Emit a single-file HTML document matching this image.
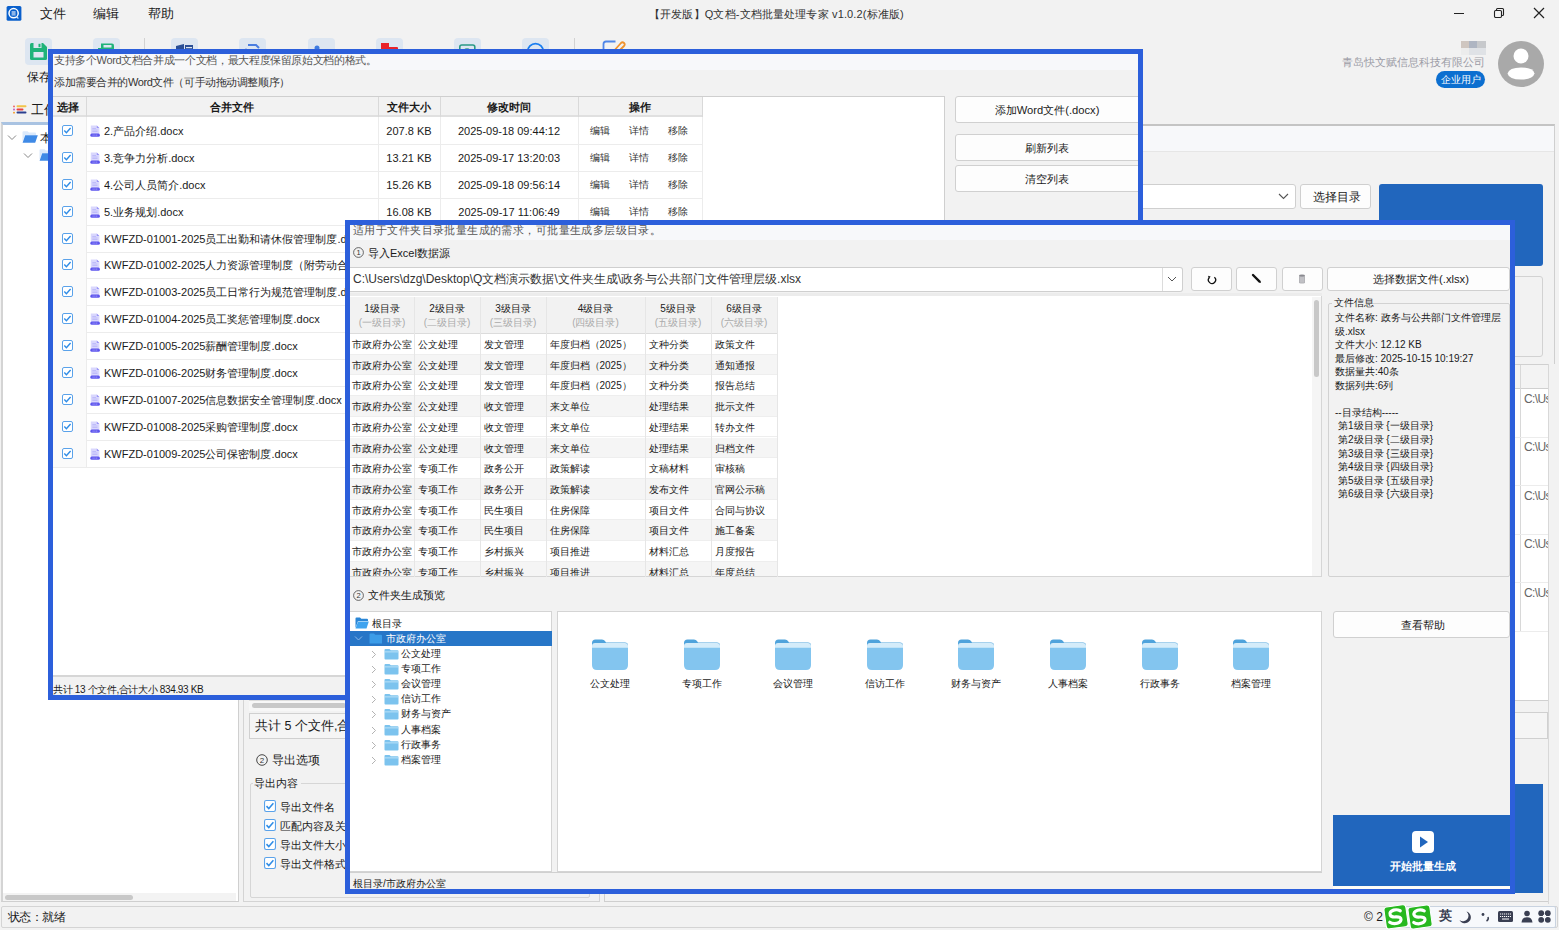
<!DOCTYPE html><html><head><meta charset="utf-8"><style>
*{box-sizing:border-box;margin:0;padding:0}
html,body{width:1559px;height:930px;overflow:hidden;background:#f2f2f2;font-family:"Liberation Sans",sans-serif;color:#1a1a1a}
div{position:absolute}
.t{white-space:nowrap;font-size:12px;line-height:14px}
.c{text-align:center}
.b{font-weight:bold}
.g{color:#9a9a9a}
.btn{background:#fdfdfd;border:1px solid #d0d0d0;border-radius:3px}
svg{display:block}
</style></head><body>
<div style="left:6px;top:6px"><svg width="16" height="15" viewBox="0 0 16 15"><rect x="0.6" y="0" width="14.8" height="14.8" rx="1.6" fill="#0a60cc"/><circle cx="7.6" cy="7.2" r="4.6" fill="none" stroke="#fff" stroke-width="1.5"/><rect x="5.6" y="5" width="4" height="4.6" fill="#8fb6e8"/><path d="M10.2 10.6 L12.4 12.6" stroke="#cfe0f5" stroke-width="1.4"/></svg></div>
<div class="t " style="left:40px;top:7px;font-size:13px">文件</div>
<div class="t " style="left:93px;top:7px;font-size:13px">编辑</div>
<div class="t " style="left:148px;top:7px;font-size:13px">帮助</div>
<div class="t " style="left:649px;top:7px;font-size:11px;letter-spacing:0.15px;color:#333">【开发版】Q文档-文档批量处理专家 v1.0.2(标准版)</div>
<div style="position:absolute;left:1454px;top:13px;width:10px;height:1px;background:#222"></div>
<div style="left:1492px;top:6px"><svg width="14" height="14" viewBox="0 0 14 14"><rect x="2.5" y="4.5" width="7" height="7" rx="1.2" fill="none" stroke="#222" stroke-width="1.1"/><path d="M4.5 4.5 V3.5 Q4.5 2.5 5.5 2.5 H10.5 Q11.5 2.5 11.5 3.5 V8.5 Q11.5 9.5 10.5 9.5 H9.5" fill="none" stroke="#222" stroke-width="1.1"/></svg></div>
<div style="left:1533px;top:7px"><svg width="12" height="12" viewBox="0 0 12 12"><path d="M1 1 L11 11 M11 1 L1 11" stroke="#222" stroke-width="1.2"/></svg></div>
<div style="position:absolute;left:25px;top:38px;width:27px;height:27px;background:#dde6f1;border-radius:4px"></div>
<div style="position:absolute;left:93px;top:38px;width:27px;height:27px;background:#dde6f1;border-radius:4px"></div>
<div style="position:absolute;left:171px;top:38px;width:27px;height:27px;background:#dde6f1;border-radius:4px"></div>
<div style="position:absolute;left:239px;top:38px;width:27px;height:27px;background:#dde6f1;border-radius:4px"></div>
<div style="position:absolute;left:308px;top:38px;width:27px;height:27px;background:#dde6f1;border-radius:4px"></div>
<div style="position:absolute;left:376px;top:38px;width:27px;height:27px;background:#dde6f1;border-radius:4px"></div>
<div style="position:absolute;left:454px;top:38px;width:27px;height:27px;background:#dde6f1;border-radius:4px"></div>
<div style="position:absolute;left:522px;top:38px;width:27px;height:27px;background:#dde6f1;border-radius:4px"></div>
<div style="position:absolute;left:144px;top:38px;width:1px;height:22px;background:#d2d2d2"></div>
<div style="position:absolute;left:574px;top:38px;width:1px;height:22px;background:#d2d2d2"></div>
<div style="left:29px;top:42px"><svg width="19" height="19" viewBox="0 0 19 19"><path d="M1 2.5 Q1 1 2.5 1 H14 L18 5 V16.5 Q18 18 16.5 18 H2.5 Q1 18 1 16.5Z" fill="#1fb37a"/><rect x="4.5" y="1" width="8" height="5" fill="#dde6f1"/><rect x="9.5" y="1.8" width="2" height="3.4" fill="#1fb37a"/><rect x="4.5" y="10" width="10" height="5.5" fill="#dde6f1"/></svg></div>
<div style="left:97px;top:42px"><svg width="19" height="19" viewBox="0 0 19 19"><path d="M4 1.5 H15 Q17 1.5 17 3.5 V7 H4Z" fill="#1fb37a"/><rect x="6.5" y="3" width="8" height="2.5" fill="#dde6f1"/><rect x="1" y="6" width="3" height="3" fill="#1fb37a"/></svg></div>
<div style="left:175px;top:42px"><svg width="19" height="19" viewBox="0 0 19 19"><path d="M1 4 L9 2 V10 H1Z" fill="#2b4f96"/><rect x="10" y="3" width="8" height="7" fill="#2b4f96"/><rect x="11" y="5" width="6" height="1.2" fill="#dde6f1"/></svg></div>
<div style="left:243px;top:42px"><svg width="19" height="19" viewBox="0 0 19 19"><path d="M5 3 H13 L16 6" fill="none" stroke="#4a7de0" stroke-width="2"/><circle cx="3" cy="8" r="1.5" fill="#4a7de0"/></svg></div>
<div style="left:312px;top:42px"><svg width="19" height="19" viewBox="0 0 19 19"><circle cx="5" cy="6" r="2.5" fill="#3e7be0"/><rect x="10" y="7" width="7" height="2" fill="#3e7be0"/></svg></div>
<div style="left:380px;top:42px"><svg width="19" height="19" viewBox="0 0 19 19"><rect x="1" y="1" width="8" height="6" fill="#e9232a"/><rect x="7" y="5" width="11" height="4" rx="1" fill="#e9232a"/></svg></div>
<div style="left:458px;top:42px"><svg width="19" height="19" viewBox="0 0 19 19"><rect x="1.8" y="3" width="15" height="11" rx="2" fill="none" stroke="#2a9a86" stroke-width="1.6"/><circle cx="9" cy="11" r="4" fill="none" stroke="#2a9a86" stroke-width="1.5"/></svg></div>
<div style="left:526px;top:42px"><svg width="19" height="19" viewBox="0 0 19 19"><circle cx="9.5" cy="9.5" r="7.8" fill="none" stroke="#1a7ef0" stroke-width="1.8"/><rect x="7" y="7" width="5" height="2" fill="#555"/></svg></div>
<div style="left:601px;top:39px"><svg width="26" height="16" viewBox="0 0 26 16"><path d="M14.5 2.5 H5 Q2.5 2.5 2.5 5 V14" fill="none" stroke="#4f86e8" stroke-width="1.8"/><path d="M11 14 L20 4 Q21.5 2.5 23 4 Q24.5 5.5 23 7 L14 16" fill="none" stroke="#f0932e" stroke-width="1.8"/></svg></div>
<div class="t " style="left:27px;top:70px;font-size:12px">保存</div>
<div style="left:1461px;top:41px;width:25px;height:15px"><div style="left:0;top:0;width:8px;height:7px;background:#cfc6c0"></div><div style="left:8px;top:0;width:8px;height:7px;background:#aeb5c2"></div><div style="left:16px;top:0;width:9px;height:7px;background:#c7c9cc"></div><div style="left:0;top:7px;width:8px;height:7px;background:#ececec"></div><div style="left:8px;top:7px;width:17px;height:7px;background:#dfe2e6"></div></div>
<div class="t " style="left:1342px;top:55px;font-size:11px;color:#9c9ca6">青岛快文赋信息科技有限公司</div>
<div style="position:absolute;left:1436px;top:71px;width:49px;height:17px;background:#0c6fd0;border-radius:9px"></div>
<div class="t c " style="left:1310.5px;top:72.5px;width:300px;font-size:10.4px;color:#fff">企业用户</div>
<div style="left:1498px;top:41px"><svg width="46" height="46" viewBox="0 0 46 46"><circle cx="23" cy="23" r="23" fill="#a9a9a9"/><circle cx="23" cy="15" r="7.5" fill="#fff"/><path d="M9.5 32.5 Q11 26.5 23 26.5 Q35 26.5 36.5 32.5 Q35 38.5 23 38.5 Q11 38.5 9.5 32.5Z" fill="#fff"/></svg></div>
<div style="left:13px;top:105px"><svg width="14" height="9" viewBox="0 0 14 9"><rect x="0" y="0.5" width="2" height="1.8" rx="0.9" fill="#f06a6a"/><rect x="3.5" y="0.2" width="10" height="2" rx="1" fill="#f2c44a"/><rect x="0" y="3.6" width="2" height="1.8" rx="0.9" fill="#c060c8"/><rect x="3.5" y="3.4" width="7" height="2" rx="1" fill="#e84040"/><rect x="0" y="6.8" width="2" height="1.8" rx="0.9" fill="#f5a030"/><rect x="3.5" y="6.6" width="10" height="2" rx="1" fill="#2a3f8f"/></svg></div>
<div class="t " style="left:31px;top:103px;font-size:13px">工作区</div>
<div style="position:absolute;left:1px;top:122px;width:238px;height:780px;background:#fff;border:1px solid #cfcfcf;border-left:2px solid #d4d4d4;border-top:3px solid #a9c3e2"></div>
<div style="left:7px;top:134px"><svg width="10" height="7" viewBox="0 0 10 7"><path d="M1 1.5 L5 5.5 L9 1.5" fill="none" stroke="#888" stroke-width="1"/></svg></div>
<div style="left:22px;top:131px"><svg width="16" height="12" viewBox="0 0 16 12"><path d="M0.5 1.2 Q0.5 0.3 1.5 0.3 H5.5 L7 1.6 H13 Q14 1.6 14 2.6 V4 H3 L0.5 11Z" fill="#dbe9fb"/><path d="M3.2 4.3 H15.8 L13.2 11.8 H0.6Z" fill="#3f8ae6"/></svg></div>
<div class="t " style="left:40px;top:131px;font-size:12px">本</div>
<div style="left:23px;top:152px"><svg width="10" height="7" viewBox="0 0 10 7"><path d="M1 1.5 L5 5.5 L9 1.5" fill="none" stroke="#888" stroke-width="1"/></svg></div>
<div style="left:39px;top:149px"><svg width="16" height="12" viewBox="0 0 16 12"><path d="M0.5 1.2 Q0.5 0.3 1.5 0.3 H5.5 L7 1.6 H13 Q14 1.6 14 2.6 V4 H3 L0.5 11Z" fill="#dbe9fb"/><path d="M3.2 4.3 H15.8 L13.2 11.8 H0.6Z" fill="#3f8ae6"/></svg></div>
<div style="position:absolute;left:3px;top:893px;width:233px;height:8px;background:#f3f3f3"></div>
<div style="position:absolute;left:5px;top:895px;width:128px;height:5px;background:#c8c8c8;border-radius:3px"></div>
<div style="position:absolute;left:243px;top:122px;width:357px;height:780px;background:#f2f2f2;border:1px solid #d4d4d4"></div>
<div style="position:absolute;left:249px;top:700px;width:97px;height:11px;background:#f7f7f7;border-top:1px solid #ddd"></div>
<div style="position:absolute;left:252px;top:703px;width:94px;height:5px;background:#c8c8c8;border-radius:3px"></div>
<div style="position:absolute;left:249px;top:713px;width:100px;height:26px;background:#f5f5f5;border:1px solid #d0d0d0"></div>
<div class="t " style="left:255px;top:719px;font-size:12.5px">共计 5 个文件,合计大小</div>
<div style="left:256px;top:754px"><svg width="12" height="12" viewBox="0 0 12 12"><circle cx="6" cy="6" r="5.3" fill="none" stroke="#333" stroke-width="0.9"/><text x="6" y="9" font-size="8" text-anchor="middle" fill="#333" font-family="Liberation Sans">2</text></svg></div>
<div class="t " style="left:272px;top:753px;font-size:12px">导出选项</div>
<div style="position:absolute;left:250px;top:783px;width:340px;height:115px;border:1px solid #d6d6d6;border-radius:2px"></div>
<div style="position:absolute;left:253px;top:776px;width:48px;height:14px;background:#f2f2f2"></div>
<div class="t " style="left:254px;top:776px;font-size:11px">导出内容</div>
<div style="left:264px;top:800px"><svg width="12" height="12" viewBox="0 0 11 11"><rect x="0.5" y="0.5" width="10" height="10" rx="1.5" fill="#fff" stroke="#5aa2ea"/><path d="M2.3 5.6 L4.4 7.8 L8.6 3.0" fill="none" stroke="#2f8ce6" stroke-width="1.4"/></svg></div>
<div class="t " style="left:280px;top:800px;font-size:11px">导出文件名</div>
<div style="left:264px;top:819px"><svg width="12" height="12" viewBox="0 0 11 11"><rect x="0.5" y="0.5" width="10" height="10" rx="1.5" fill="#fff" stroke="#5aa2ea"/><path d="M2.3 5.6 L4.4 7.8 L8.6 3.0" fill="none" stroke="#2f8ce6" stroke-width="1.4"/></svg></div>
<div class="t " style="left:280px;top:819px;font-size:11px">匹配内容及关</div>
<div style="left:264px;top:838px"><svg width="12" height="12" viewBox="0 0 11 11"><rect x="0.5" y="0.5" width="10" height="10" rx="1.5" fill="#fff" stroke="#5aa2ea"/><path d="M2.3 5.6 L4.4 7.8 L8.6 3.0" fill="none" stroke="#2f8ce6" stroke-width="1.4"/></svg></div>
<div class="t " style="left:280px;top:838px;font-size:11px">导出文件大小</div>
<div style="left:264px;top:857px"><svg width="12" height="12" viewBox="0 0 11 11"><rect x="0.5" y="0.5" width="10" height="10" rx="1.5" fill="#fff" stroke="#5aa2ea"/><path d="M2.3 5.6 L4.4 7.8 L8.6 3.0" fill="none" stroke="#2f8ce6" stroke-width="1.4"/></svg></div>
<div class="t " style="left:280px;top:857px;font-size:11px">导出文件格式</div>
<div style="position:absolute;left:604px;top:124px;width:951px;height:778px;background:#f2f2f2;border:1px solid #cfcfcf;border-top:2px solid #c4c4c4"></div>
<div style="position:absolute;left:605px;top:126px;width:949px;height:26px;background:#f7f8fa;border-bottom:1px solid #e6e6e6"></div>
<div style="position:absolute;left:1000px;top:184px;width:296px;height:25px;background:#fff;border:1px solid #cfcfcf;border-radius:3px"></div>
<div style="left:1278px;top:192px"><svg width="11" height="8" viewBox="0 0 11 8"><path d="M1 2 L5.5 6.5 L10 2" fill="none" stroke="#555" stroke-width="1.1"/></svg></div>
<div style="position:absolute;left:1300px;top:184px;width:71px;height:25px;background:#fdfdfd;border:1px solid #cfcfcf;border-radius:3px"></div>
<div class="t " style="left:1313px;top:190px;font-size:12px">选择目录</div>
<div style="position:absolute;left:1379px;top:184px;width:164px;height:82px;background:#2166bd;border-radius:3px"></div>
<div style="position:absolute;left:1510px;top:276px;width:33px;height:81px;border:1px solid #d2d2d2;border-radius:3px"></div>
<div style="position:absolute;left:1510px;top:364px;width:40px;height:337px;background:#fff;border:1px solid #d0d0d0"></div>
<div style="position:absolute;left:1510px;top:365px;width:39px;height:24px;background:#f3f3f3;border-bottom:1px solid #d0d0d0"></div>
<div style="position:absolute;left:1520px;top:365px;width:1px;height:266px;background:#d8d8d8"></div>
<div style="position:absolute;left:1515px;top:437px;width:34px;height:1px;background:#ececec"></div>
<div style="position:absolute;left:1515px;top:485px;width:34px;height:1px;background:#ececec"></div>
<div style="position:absolute;left:1515px;top:534px;width:34px;height:1px;background:#ececec"></div>
<div style="position:absolute;left:1515px;top:582px;width:34px;height:1px;background:#ececec"></div>
<div style="position:absolute;left:1515px;top:631px;width:34px;height:1px;background:#ececec"></div>
<div class="t " style="left:1524px;top:392px;font-size:12px;color:#666;letter-spacing:-0.6px">C:\Us</div>
<div class="t " style="left:1524px;top:440px;font-size:12px;color:#666;letter-spacing:-0.6px">C:\Us</div>
<div class="t " style="left:1524px;top:489px;font-size:12px;color:#666;letter-spacing:-0.6px">C:\Us</div>
<div class="t " style="left:1524px;top:537px;font-size:12px;color:#666;letter-spacing:-0.6px">C:\Us</div>
<div class="t " style="left:1524px;top:586px;font-size:12px;color:#666;letter-spacing:-0.6px">C:\Us</div>
<div style="position:absolute;left:1510px;top:712px;width:38px;height:27px;border:1px solid #d0d0d0;background:#f5f5f5"></div>
<div style="position:absolute;left:1515px;top:784px;width:28px;height:109px;background:#2166bd"></div>
<div style="position:absolute;left:1548px;top:364px;width:7px;height:540px;background:#f2f2f2;border-left:1px solid #d8d8d8"></div>
<div style="position:absolute;left:1px;top:906px;width:1557px;height:22px;background:#f2f2f2;border:1px solid #d4d4d4;border-radius:2px"></div>
<div class="t " style="left:8px;top:910px;font-size:12px;letter-spacing:-0.6px">状态：就绪</div>
<div class="t " style="left:1364px;top:910px;font-size:12px">© 2</div>
<div style="position:absolute;left:48px;top:49px;width:1095px;height:651px;background:#f2f2f2;border:5px solid #2c5fdb"></div>
<div style="position:absolute;left:53px;top:54px;width:1085px;height:16px;background:#f7f8fa"></div>
<div class="t " style="left:54px;top:53px;font-size:11px;letter-spacing:-0.36px;color:#555">支持多个Word文档合并成一个文档，最大程度保留原始文档的格式。</div>
<div class="t " style="left:54px;top:75px;font-size:11px;letter-spacing:-0.43px;color:#333">添加需要合并的Word文件（可手动拖动调整顺序）</div>
<div style="position:absolute;left:53px;top:96px;width:892px;height:579px;background:#fff;border-top:1px solid #cfcfcf;border-right:1px solid #cfcfcf"></div>
<div style="position:absolute;left:53px;top:97px;width:650px;height:20px;background:#f2f2f2;border-bottom:2px solid #e0e0e0"></div>
<div style="position:absolute;left:86px;top:97px;width:1px;height:20px;background:#d9d9d9"></div>
<div style="position:absolute;left:378px;top:97px;width:1px;height:20px;background:#d9d9d9"></div>
<div style="position:absolute;left:440px;top:97px;width:1px;height:20px;background:#d9d9d9"></div>
<div style="position:absolute;left:578px;top:97px;width:1px;height:20px;background:#d9d9d9"></div>
<div style="position:absolute;left:702px;top:97px;width:1px;height:20px;background:#d9d9d9"></div>
<div class="t b" style="left:57px;top:100px;font-size:11px">选择</div>
<div class="t c b" style="left:82px;top:100px;width:300px;font-size:11px">合并文件</div>
<div class="t c b" style="left:259px;top:100px;width:300px;font-size:11px">文件大小</div>
<div class="t c b" style="left:359px;top:100px;width:300px;font-size:11px">修改时间</div>
<div class="t c b" style="left:490px;top:100px;width:300px;font-size:11px">操作</div>
<div style="position:absolute;left:53px;top:117px;width:33px;height:27px;background:#fafafa"></div>
<div style="position:absolute;left:53px;top:144px;width:650px;height:1px;background:#ececec"></div>
<div style="position:absolute;left:86px;top:117px;width:1px;height:27px;background:#ececec"></div>
<div style="position:absolute;left:378px;top:117px;width:1px;height:27px;background:#ececec"></div>
<div style="position:absolute;left:440px;top:117px;width:1px;height:27px;background:#ececec"></div>
<div style="position:absolute;left:578px;top:117px;width:1px;height:27px;background:#ececec"></div>
<div style="position:absolute;left:702px;top:117px;width:1px;height:27px;background:#ececec"></div>
<div style="left:62px;top:125px"><svg width="11" height="11" viewBox="0 0 11 11"><rect x="0.5" y="0.5" width="10" height="10" rx="1.5" fill="#fff" stroke="#5aa2ea"/><path d="M2.3 5.6 L4.4 7.8 L8.6 3.0" fill="none" stroke="#2f8ce6" stroke-width="1.4"/></svg></div>
<div style="left:90px;top:125px"><svg width="10" height="12" viewBox="0 0 10 12"><path d="M0.8 0.5 H6.8 L9.4 3.1 V9 H0.8 Z" fill="#d9d7fd"/><path d="M6.8 0.5 L9.4 3.1 H6.8Z" fill="#9a96f6"/><path d="M2.3 3.5 H6 M2.3 5 H7.5 M2.3 6.5 H7.5" stroke="#b9b5f9" stroke-width="0.8"/><rect x="0.3" y="8.4" width="9.6" height="3.4" rx="1.5" fill="#5d55ee"/><path d="M2.5 10.1 H7.8" stroke="#a9a4f7" stroke-width="0.9" stroke-dasharray="1.2 0.6"/></svg></div>
<div class="t" style="left:104px;top:124px;width:273px;overflow:hidden;font-size:11px">2.产品介绍.docx</div>
<div class="t c " style="left:259px;top:124px;width:300px;font-size:11px">207.8 KB</div>
<div class="t c " style="left:359px;top:124px;width:300px;font-size:11px">2025-09-18 09:44:12</div>
<div class="t " style="left:590px;top:124px;font-size:10px;color:#333">编辑</div>
<div class="t " style="left:629px;top:124px;font-size:10px;color:#333">详情</div>
<div class="t " style="left:668px;top:124px;font-size:10px;color:#333">移除</div>
<div style="position:absolute;left:53px;top:144px;width:33px;height:27px;background:#fafafa"></div>
<div style="position:absolute;left:53px;top:171px;width:650px;height:1px;background:#ececec"></div>
<div style="position:absolute;left:86px;top:144px;width:1px;height:27px;background:#ececec"></div>
<div style="position:absolute;left:378px;top:144px;width:1px;height:27px;background:#ececec"></div>
<div style="position:absolute;left:440px;top:144px;width:1px;height:27px;background:#ececec"></div>
<div style="position:absolute;left:578px;top:144px;width:1px;height:27px;background:#ececec"></div>
<div style="position:absolute;left:702px;top:144px;width:1px;height:27px;background:#ececec"></div>
<div style="left:62px;top:152px"><svg width="11" height="11" viewBox="0 0 11 11"><rect x="0.5" y="0.5" width="10" height="10" rx="1.5" fill="#fff" stroke="#5aa2ea"/><path d="M2.3 5.6 L4.4 7.8 L8.6 3.0" fill="none" stroke="#2f8ce6" stroke-width="1.4"/></svg></div>
<div style="left:90px;top:152px"><svg width="10" height="12" viewBox="0 0 10 12"><path d="M0.8 0.5 H6.8 L9.4 3.1 V9 H0.8 Z" fill="#d9d7fd"/><path d="M6.8 0.5 L9.4 3.1 H6.8Z" fill="#9a96f6"/><path d="M2.3 3.5 H6 M2.3 5 H7.5 M2.3 6.5 H7.5" stroke="#b9b5f9" stroke-width="0.8"/><rect x="0.3" y="8.4" width="9.6" height="3.4" rx="1.5" fill="#5d55ee"/><path d="M2.5 10.1 H7.8" stroke="#a9a4f7" stroke-width="0.9" stroke-dasharray="1.2 0.6"/></svg></div>
<div class="t" style="left:104px;top:151px;width:273px;overflow:hidden;font-size:11px">3.竞争力分析.docx</div>
<div class="t c " style="left:259px;top:151px;width:300px;font-size:11px">13.21 KB</div>
<div class="t c " style="left:359px;top:151px;width:300px;font-size:11px">2025-09-17 13:20:03</div>
<div class="t " style="left:590px;top:151px;font-size:10px;color:#333">编辑</div>
<div class="t " style="left:629px;top:151px;font-size:10px;color:#333">详情</div>
<div class="t " style="left:668px;top:151px;font-size:10px;color:#333">移除</div>
<div style="position:absolute;left:53px;top:171px;width:33px;height:27px;background:#fafafa"></div>
<div style="position:absolute;left:53px;top:198px;width:650px;height:1px;background:#ececec"></div>
<div style="position:absolute;left:86px;top:171px;width:1px;height:27px;background:#ececec"></div>
<div style="position:absolute;left:378px;top:171px;width:1px;height:27px;background:#ececec"></div>
<div style="position:absolute;left:440px;top:171px;width:1px;height:27px;background:#ececec"></div>
<div style="position:absolute;left:578px;top:171px;width:1px;height:27px;background:#ececec"></div>
<div style="position:absolute;left:702px;top:171px;width:1px;height:27px;background:#ececec"></div>
<div style="left:62px;top:179px"><svg width="11" height="11" viewBox="0 0 11 11"><rect x="0.5" y="0.5" width="10" height="10" rx="1.5" fill="#fff" stroke="#5aa2ea"/><path d="M2.3 5.6 L4.4 7.8 L8.6 3.0" fill="none" stroke="#2f8ce6" stroke-width="1.4"/></svg></div>
<div style="left:90px;top:179px"><svg width="10" height="12" viewBox="0 0 10 12"><path d="M0.8 0.5 H6.8 L9.4 3.1 V9 H0.8 Z" fill="#d9d7fd"/><path d="M6.8 0.5 L9.4 3.1 H6.8Z" fill="#9a96f6"/><path d="M2.3 3.5 H6 M2.3 5 H7.5 M2.3 6.5 H7.5" stroke="#b9b5f9" stroke-width="0.8"/><rect x="0.3" y="8.4" width="9.6" height="3.4" rx="1.5" fill="#5d55ee"/><path d="M2.5 10.1 H7.8" stroke="#a9a4f7" stroke-width="0.9" stroke-dasharray="1.2 0.6"/></svg></div>
<div class="t" style="left:104px;top:178px;width:273px;overflow:hidden;font-size:11px">4.公司人员简介.docx</div>
<div class="t c " style="left:259px;top:178px;width:300px;font-size:11px">15.26 KB</div>
<div class="t c " style="left:359px;top:178px;width:300px;font-size:11px">2025-09-18 09:56:14</div>
<div class="t " style="left:590px;top:178px;font-size:10px;color:#333">编辑</div>
<div class="t " style="left:629px;top:178px;font-size:10px;color:#333">详情</div>
<div class="t " style="left:668px;top:178px;font-size:10px;color:#333">移除</div>
<div style="position:absolute;left:53px;top:198px;width:33px;height:27px;background:#fafafa"></div>
<div style="position:absolute;left:53px;top:225px;width:650px;height:1px;background:#ececec"></div>
<div style="position:absolute;left:86px;top:198px;width:1px;height:27px;background:#ececec"></div>
<div style="position:absolute;left:378px;top:198px;width:1px;height:27px;background:#ececec"></div>
<div style="position:absolute;left:440px;top:198px;width:1px;height:27px;background:#ececec"></div>
<div style="position:absolute;left:578px;top:198px;width:1px;height:27px;background:#ececec"></div>
<div style="position:absolute;left:702px;top:198px;width:1px;height:27px;background:#ececec"></div>
<div style="left:62px;top:206px"><svg width="11" height="11" viewBox="0 0 11 11"><rect x="0.5" y="0.5" width="10" height="10" rx="1.5" fill="#fff" stroke="#5aa2ea"/><path d="M2.3 5.6 L4.4 7.8 L8.6 3.0" fill="none" stroke="#2f8ce6" stroke-width="1.4"/></svg></div>
<div style="left:90px;top:206px"><svg width="10" height="12" viewBox="0 0 10 12"><path d="M0.8 0.5 H6.8 L9.4 3.1 V9 H0.8 Z" fill="#d9d7fd"/><path d="M6.8 0.5 L9.4 3.1 H6.8Z" fill="#9a96f6"/><path d="M2.3 3.5 H6 M2.3 5 H7.5 M2.3 6.5 H7.5" stroke="#b9b5f9" stroke-width="0.8"/><rect x="0.3" y="8.4" width="9.6" height="3.4" rx="1.5" fill="#5d55ee"/><path d="M2.5 10.1 H7.8" stroke="#a9a4f7" stroke-width="0.9" stroke-dasharray="1.2 0.6"/></svg></div>
<div class="t" style="left:104px;top:205px;width:273px;overflow:hidden;font-size:11px">5.业务规划.docx</div>
<div class="t c " style="left:259px;top:205px;width:300px;font-size:11px">16.08 KB</div>
<div class="t c " style="left:359px;top:205px;width:300px;font-size:11px">2025-09-17 11:06:49</div>
<div class="t " style="left:590px;top:205px;font-size:10px;color:#333">编辑</div>
<div class="t " style="left:629px;top:205px;font-size:10px;color:#333">详情</div>
<div class="t " style="left:668px;top:205px;font-size:10px;color:#333">移除</div>
<div style="position:absolute;left:53px;top:225px;width:33px;height:27px;background:#fafafa"></div>
<div style="position:absolute;left:53px;top:252px;width:650px;height:1px;background:#ececec"></div>
<div style="position:absolute;left:86px;top:225px;width:1px;height:27px;background:#ececec"></div>
<div style="position:absolute;left:378px;top:225px;width:1px;height:27px;background:#ececec"></div>
<div style="position:absolute;left:440px;top:225px;width:1px;height:27px;background:#ececec"></div>
<div style="position:absolute;left:578px;top:225px;width:1px;height:27px;background:#ececec"></div>
<div style="position:absolute;left:702px;top:225px;width:1px;height:27px;background:#ececec"></div>
<div style="left:62px;top:233px"><svg width="11" height="11" viewBox="0 0 11 11"><rect x="0.5" y="0.5" width="10" height="10" rx="1.5" fill="#fff" stroke="#5aa2ea"/><path d="M2.3 5.6 L4.4 7.8 L8.6 3.0" fill="none" stroke="#2f8ce6" stroke-width="1.4"/></svg></div>
<div style="left:90px;top:233px"><svg width="10" height="12" viewBox="0 0 10 12"><path d="M0.8 0.5 H6.8 L9.4 3.1 V9 H0.8 Z" fill="#d9d7fd"/><path d="M6.8 0.5 L9.4 3.1 H6.8Z" fill="#9a96f6"/><path d="M2.3 3.5 H6 M2.3 5 H7.5 M2.3 6.5 H7.5" stroke="#b9b5f9" stroke-width="0.8"/><rect x="0.3" y="8.4" width="9.6" height="3.4" rx="1.5" fill="#5d55ee"/><path d="M2.5 10.1 H7.8" stroke="#a9a4f7" stroke-width="0.9" stroke-dasharray="1.2 0.6"/></svg></div>
<div class="t" style="left:104px;top:232px;width:273px;overflow:hidden;font-size:11px">KWFZD-01001-2025员工出勤和请休假管理制度.docx</div>
<div class="t c " style="left:259px;top:232px;width:300px;font-size:11px"></div>
<div class="t c " style="left:359px;top:232px;width:300px;font-size:11px"></div>
<div class="t " style="left:590px;top:232px;font-size:10px;color:#333">编辑</div>
<div class="t " style="left:629px;top:232px;font-size:10px;color:#333">详情</div>
<div class="t " style="left:668px;top:232px;font-size:10px;color:#333">移除</div>
<div style="position:absolute;left:53px;top:251px;width:33px;height:27px;background:#fafafa"></div>
<div style="position:absolute;left:53px;top:278px;width:650px;height:1px;background:#ececec"></div>
<div style="position:absolute;left:86px;top:251px;width:1px;height:27px;background:#ececec"></div>
<div style="position:absolute;left:378px;top:251px;width:1px;height:27px;background:#ececec"></div>
<div style="position:absolute;left:440px;top:251px;width:1px;height:27px;background:#ececec"></div>
<div style="position:absolute;left:578px;top:251px;width:1px;height:27px;background:#ececec"></div>
<div style="position:absolute;left:702px;top:251px;width:1px;height:27px;background:#ececec"></div>
<div style="left:62px;top:259px"><svg width="11" height="11" viewBox="0 0 11 11"><rect x="0.5" y="0.5" width="10" height="10" rx="1.5" fill="#fff" stroke="#5aa2ea"/><path d="M2.3 5.6 L4.4 7.8 L8.6 3.0" fill="none" stroke="#2f8ce6" stroke-width="1.4"/></svg></div>
<div style="left:90px;top:259px"><svg width="10" height="12" viewBox="0 0 10 12"><path d="M0.8 0.5 H6.8 L9.4 3.1 V9 H0.8 Z" fill="#d9d7fd"/><path d="M6.8 0.5 L9.4 3.1 H6.8Z" fill="#9a96f6"/><path d="M2.3 3.5 H6 M2.3 5 H7.5 M2.3 6.5 H7.5" stroke="#b9b5f9" stroke-width="0.8"/><rect x="0.3" y="8.4" width="9.6" height="3.4" rx="1.5" fill="#5d55ee"/><path d="M2.5 10.1 H7.8" stroke="#a9a4f7" stroke-width="0.9" stroke-dasharray="1.2 0.6"/></svg></div>
<div class="t" style="left:104px;top:258px;width:273px;overflow:hidden;font-size:11px">KWFZD-01002-2025人力资源管理制度（附劳动合同范本）.docx</div>
<div class="t c " style="left:259px;top:258px;width:300px;font-size:11px"></div>
<div class="t c " style="left:359px;top:258px;width:300px;font-size:11px"></div>
<div class="t " style="left:590px;top:258px;font-size:10px;color:#333">编辑</div>
<div class="t " style="left:629px;top:258px;font-size:10px;color:#333">详情</div>
<div class="t " style="left:668px;top:258px;font-size:10px;color:#333">移除</div>
<div style="position:absolute;left:53px;top:278px;width:33px;height:27px;background:#fafafa"></div>
<div style="position:absolute;left:53px;top:305px;width:650px;height:1px;background:#ececec"></div>
<div style="position:absolute;left:86px;top:278px;width:1px;height:27px;background:#ececec"></div>
<div style="position:absolute;left:378px;top:278px;width:1px;height:27px;background:#ececec"></div>
<div style="position:absolute;left:440px;top:278px;width:1px;height:27px;background:#ececec"></div>
<div style="position:absolute;left:578px;top:278px;width:1px;height:27px;background:#ececec"></div>
<div style="position:absolute;left:702px;top:278px;width:1px;height:27px;background:#ececec"></div>
<div style="left:62px;top:286px"><svg width="11" height="11" viewBox="0 0 11 11"><rect x="0.5" y="0.5" width="10" height="10" rx="1.5" fill="#fff" stroke="#5aa2ea"/><path d="M2.3 5.6 L4.4 7.8 L8.6 3.0" fill="none" stroke="#2f8ce6" stroke-width="1.4"/></svg></div>
<div style="left:90px;top:286px"><svg width="10" height="12" viewBox="0 0 10 12"><path d="M0.8 0.5 H6.8 L9.4 3.1 V9 H0.8 Z" fill="#d9d7fd"/><path d="M6.8 0.5 L9.4 3.1 H6.8Z" fill="#9a96f6"/><path d="M2.3 3.5 H6 M2.3 5 H7.5 M2.3 6.5 H7.5" stroke="#b9b5f9" stroke-width="0.8"/><rect x="0.3" y="8.4" width="9.6" height="3.4" rx="1.5" fill="#5d55ee"/><path d="M2.5 10.1 H7.8" stroke="#a9a4f7" stroke-width="0.9" stroke-dasharray="1.2 0.6"/></svg></div>
<div class="t" style="left:104px;top:285px;width:273px;overflow:hidden;font-size:11px">KWFZD-01003-2025员工日常行为规范管理制度.docx</div>
<div class="t c " style="left:259px;top:285px;width:300px;font-size:11px"></div>
<div class="t c " style="left:359px;top:285px;width:300px;font-size:11px"></div>
<div class="t " style="left:590px;top:285px;font-size:10px;color:#333">编辑</div>
<div class="t " style="left:629px;top:285px;font-size:10px;color:#333">详情</div>
<div class="t " style="left:668px;top:285px;font-size:10px;color:#333">移除</div>
<div style="position:absolute;left:53px;top:305px;width:33px;height:27px;background:#fafafa"></div>
<div style="position:absolute;left:53px;top:332px;width:650px;height:1px;background:#ececec"></div>
<div style="position:absolute;left:86px;top:305px;width:1px;height:27px;background:#ececec"></div>
<div style="position:absolute;left:378px;top:305px;width:1px;height:27px;background:#ececec"></div>
<div style="position:absolute;left:440px;top:305px;width:1px;height:27px;background:#ececec"></div>
<div style="position:absolute;left:578px;top:305px;width:1px;height:27px;background:#ececec"></div>
<div style="position:absolute;left:702px;top:305px;width:1px;height:27px;background:#ececec"></div>
<div style="left:62px;top:313px"><svg width="11" height="11" viewBox="0 0 11 11"><rect x="0.5" y="0.5" width="10" height="10" rx="1.5" fill="#fff" stroke="#5aa2ea"/><path d="M2.3 5.6 L4.4 7.8 L8.6 3.0" fill="none" stroke="#2f8ce6" stroke-width="1.4"/></svg></div>
<div style="left:90px;top:313px"><svg width="10" height="12" viewBox="0 0 10 12"><path d="M0.8 0.5 H6.8 L9.4 3.1 V9 H0.8 Z" fill="#d9d7fd"/><path d="M6.8 0.5 L9.4 3.1 H6.8Z" fill="#9a96f6"/><path d="M2.3 3.5 H6 M2.3 5 H7.5 M2.3 6.5 H7.5" stroke="#b9b5f9" stroke-width="0.8"/><rect x="0.3" y="8.4" width="9.6" height="3.4" rx="1.5" fill="#5d55ee"/><path d="M2.5 10.1 H7.8" stroke="#a9a4f7" stroke-width="0.9" stroke-dasharray="1.2 0.6"/></svg></div>
<div class="t" style="left:104px;top:312px;width:273px;overflow:hidden;font-size:11px">KWFZD-01004-2025员工奖惩管理制度.docx</div>
<div class="t c " style="left:259px;top:312px;width:300px;font-size:11px"></div>
<div class="t c " style="left:359px;top:312px;width:300px;font-size:11px"></div>
<div class="t " style="left:590px;top:312px;font-size:10px;color:#333">编辑</div>
<div class="t " style="left:629px;top:312px;font-size:10px;color:#333">详情</div>
<div class="t " style="left:668px;top:312px;font-size:10px;color:#333">移除</div>
<div style="position:absolute;left:53px;top:332px;width:33px;height:27px;background:#fafafa"></div>
<div style="position:absolute;left:53px;top:359px;width:650px;height:1px;background:#ececec"></div>
<div style="position:absolute;left:86px;top:332px;width:1px;height:27px;background:#ececec"></div>
<div style="position:absolute;left:378px;top:332px;width:1px;height:27px;background:#ececec"></div>
<div style="position:absolute;left:440px;top:332px;width:1px;height:27px;background:#ececec"></div>
<div style="position:absolute;left:578px;top:332px;width:1px;height:27px;background:#ececec"></div>
<div style="position:absolute;left:702px;top:332px;width:1px;height:27px;background:#ececec"></div>
<div style="left:62px;top:340px"><svg width="11" height="11" viewBox="0 0 11 11"><rect x="0.5" y="0.5" width="10" height="10" rx="1.5" fill="#fff" stroke="#5aa2ea"/><path d="M2.3 5.6 L4.4 7.8 L8.6 3.0" fill="none" stroke="#2f8ce6" stroke-width="1.4"/></svg></div>
<div style="left:90px;top:340px"><svg width="10" height="12" viewBox="0 0 10 12"><path d="M0.8 0.5 H6.8 L9.4 3.1 V9 H0.8 Z" fill="#d9d7fd"/><path d="M6.8 0.5 L9.4 3.1 H6.8Z" fill="#9a96f6"/><path d="M2.3 3.5 H6 M2.3 5 H7.5 M2.3 6.5 H7.5" stroke="#b9b5f9" stroke-width="0.8"/><rect x="0.3" y="8.4" width="9.6" height="3.4" rx="1.5" fill="#5d55ee"/><path d="M2.5 10.1 H7.8" stroke="#a9a4f7" stroke-width="0.9" stroke-dasharray="1.2 0.6"/></svg></div>
<div class="t" style="left:104px;top:339px;width:273px;overflow:hidden;font-size:11px">KWFZD-01005-2025薪酬管理制度.docx</div>
<div class="t c " style="left:259px;top:339px;width:300px;font-size:11px"></div>
<div class="t c " style="left:359px;top:339px;width:300px;font-size:11px"></div>
<div class="t " style="left:590px;top:339px;font-size:10px;color:#333">编辑</div>
<div class="t " style="left:629px;top:339px;font-size:10px;color:#333">详情</div>
<div class="t " style="left:668px;top:339px;font-size:10px;color:#333">移除</div>
<div style="position:absolute;left:53px;top:359px;width:33px;height:27px;background:#fafafa"></div>
<div style="position:absolute;left:53px;top:386px;width:650px;height:1px;background:#ececec"></div>
<div style="position:absolute;left:86px;top:359px;width:1px;height:27px;background:#ececec"></div>
<div style="position:absolute;left:378px;top:359px;width:1px;height:27px;background:#ececec"></div>
<div style="position:absolute;left:440px;top:359px;width:1px;height:27px;background:#ececec"></div>
<div style="position:absolute;left:578px;top:359px;width:1px;height:27px;background:#ececec"></div>
<div style="position:absolute;left:702px;top:359px;width:1px;height:27px;background:#ececec"></div>
<div style="left:62px;top:367px"><svg width="11" height="11" viewBox="0 0 11 11"><rect x="0.5" y="0.5" width="10" height="10" rx="1.5" fill="#fff" stroke="#5aa2ea"/><path d="M2.3 5.6 L4.4 7.8 L8.6 3.0" fill="none" stroke="#2f8ce6" stroke-width="1.4"/></svg></div>
<div style="left:90px;top:367px"><svg width="10" height="12" viewBox="0 0 10 12"><path d="M0.8 0.5 H6.8 L9.4 3.1 V9 H0.8 Z" fill="#d9d7fd"/><path d="M6.8 0.5 L9.4 3.1 H6.8Z" fill="#9a96f6"/><path d="M2.3 3.5 H6 M2.3 5 H7.5 M2.3 6.5 H7.5" stroke="#b9b5f9" stroke-width="0.8"/><rect x="0.3" y="8.4" width="9.6" height="3.4" rx="1.5" fill="#5d55ee"/><path d="M2.5 10.1 H7.8" stroke="#a9a4f7" stroke-width="0.9" stroke-dasharray="1.2 0.6"/></svg></div>
<div class="t" style="left:104px;top:366px;width:273px;overflow:hidden;font-size:11px">KWFZD-01006-2025财务管理制度.docx</div>
<div class="t c " style="left:259px;top:366px;width:300px;font-size:11px"></div>
<div class="t c " style="left:359px;top:366px;width:300px;font-size:11px"></div>
<div class="t " style="left:590px;top:366px;font-size:10px;color:#333">编辑</div>
<div class="t " style="left:629px;top:366px;font-size:10px;color:#333">详情</div>
<div class="t " style="left:668px;top:366px;font-size:10px;color:#333">移除</div>
<div style="position:absolute;left:53px;top:386px;width:33px;height:27px;background:#fafafa"></div>
<div style="position:absolute;left:53px;top:413px;width:650px;height:1px;background:#ececec"></div>
<div style="position:absolute;left:86px;top:386px;width:1px;height:27px;background:#ececec"></div>
<div style="position:absolute;left:378px;top:386px;width:1px;height:27px;background:#ececec"></div>
<div style="position:absolute;left:440px;top:386px;width:1px;height:27px;background:#ececec"></div>
<div style="position:absolute;left:578px;top:386px;width:1px;height:27px;background:#ececec"></div>
<div style="position:absolute;left:702px;top:386px;width:1px;height:27px;background:#ececec"></div>
<div style="left:62px;top:394px"><svg width="11" height="11" viewBox="0 0 11 11"><rect x="0.5" y="0.5" width="10" height="10" rx="1.5" fill="#fff" stroke="#5aa2ea"/><path d="M2.3 5.6 L4.4 7.8 L8.6 3.0" fill="none" stroke="#2f8ce6" stroke-width="1.4"/></svg></div>
<div style="left:90px;top:394px"><svg width="10" height="12" viewBox="0 0 10 12"><path d="M0.8 0.5 H6.8 L9.4 3.1 V9 H0.8 Z" fill="#d9d7fd"/><path d="M6.8 0.5 L9.4 3.1 H6.8Z" fill="#9a96f6"/><path d="M2.3 3.5 H6 M2.3 5 H7.5 M2.3 6.5 H7.5" stroke="#b9b5f9" stroke-width="0.8"/><rect x="0.3" y="8.4" width="9.6" height="3.4" rx="1.5" fill="#5d55ee"/><path d="M2.5 10.1 H7.8" stroke="#a9a4f7" stroke-width="0.9" stroke-dasharray="1.2 0.6"/></svg></div>
<div class="t" style="left:104px;top:393px;width:273px;overflow:hidden;font-size:11px">KWFZD-01007-2025信息数据安全管理制度.docx</div>
<div class="t c " style="left:259px;top:393px;width:300px;font-size:11px"></div>
<div class="t c " style="left:359px;top:393px;width:300px;font-size:11px"></div>
<div class="t " style="left:590px;top:393px;font-size:10px;color:#333">编辑</div>
<div class="t " style="left:629px;top:393px;font-size:10px;color:#333">详情</div>
<div class="t " style="left:668px;top:393px;font-size:10px;color:#333">移除</div>
<div style="position:absolute;left:53px;top:413px;width:33px;height:27px;background:#fafafa"></div>
<div style="position:absolute;left:53px;top:440px;width:650px;height:1px;background:#ececec"></div>
<div style="position:absolute;left:86px;top:413px;width:1px;height:27px;background:#ececec"></div>
<div style="position:absolute;left:378px;top:413px;width:1px;height:27px;background:#ececec"></div>
<div style="position:absolute;left:440px;top:413px;width:1px;height:27px;background:#ececec"></div>
<div style="position:absolute;left:578px;top:413px;width:1px;height:27px;background:#ececec"></div>
<div style="position:absolute;left:702px;top:413px;width:1px;height:27px;background:#ececec"></div>
<div style="left:62px;top:421px"><svg width="11" height="11" viewBox="0 0 11 11"><rect x="0.5" y="0.5" width="10" height="10" rx="1.5" fill="#fff" stroke="#5aa2ea"/><path d="M2.3 5.6 L4.4 7.8 L8.6 3.0" fill="none" stroke="#2f8ce6" stroke-width="1.4"/></svg></div>
<div style="left:90px;top:421px"><svg width="10" height="12" viewBox="0 0 10 12"><path d="M0.8 0.5 H6.8 L9.4 3.1 V9 H0.8 Z" fill="#d9d7fd"/><path d="M6.8 0.5 L9.4 3.1 H6.8Z" fill="#9a96f6"/><path d="M2.3 3.5 H6 M2.3 5 H7.5 M2.3 6.5 H7.5" stroke="#b9b5f9" stroke-width="0.8"/><rect x="0.3" y="8.4" width="9.6" height="3.4" rx="1.5" fill="#5d55ee"/><path d="M2.5 10.1 H7.8" stroke="#a9a4f7" stroke-width="0.9" stroke-dasharray="1.2 0.6"/></svg></div>
<div class="t" style="left:104px;top:420px;width:273px;overflow:hidden;font-size:11px">KWFZD-01008-2025采购管理制度.docx</div>
<div class="t c " style="left:259px;top:420px;width:300px;font-size:11px"></div>
<div class="t c " style="left:359px;top:420px;width:300px;font-size:11px"></div>
<div class="t " style="left:590px;top:420px;font-size:10px;color:#333">编辑</div>
<div class="t " style="left:629px;top:420px;font-size:10px;color:#333">详情</div>
<div class="t " style="left:668px;top:420px;font-size:10px;color:#333">移除</div>
<div style="position:absolute;left:53px;top:440px;width:33px;height:27px;background:#fafafa"></div>
<div style="position:absolute;left:53px;top:467px;width:650px;height:1px;background:#ececec"></div>
<div style="position:absolute;left:86px;top:440px;width:1px;height:27px;background:#ececec"></div>
<div style="position:absolute;left:378px;top:440px;width:1px;height:27px;background:#ececec"></div>
<div style="position:absolute;left:440px;top:440px;width:1px;height:27px;background:#ececec"></div>
<div style="position:absolute;left:578px;top:440px;width:1px;height:27px;background:#ececec"></div>
<div style="position:absolute;left:702px;top:440px;width:1px;height:27px;background:#ececec"></div>
<div style="left:62px;top:448px"><svg width="11" height="11" viewBox="0 0 11 11"><rect x="0.5" y="0.5" width="10" height="10" rx="1.5" fill="#fff" stroke="#5aa2ea"/><path d="M2.3 5.6 L4.4 7.8 L8.6 3.0" fill="none" stroke="#2f8ce6" stroke-width="1.4"/></svg></div>
<div style="left:90px;top:448px"><svg width="10" height="12" viewBox="0 0 10 12"><path d="M0.8 0.5 H6.8 L9.4 3.1 V9 H0.8 Z" fill="#d9d7fd"/><path d="M6.8 0.5 L9.4 3.1 H6.8Z" fill="#9a96f6"/><path d="M2.3 3.5 H6 M2.3 5 H7.5 M2.3 6.5 H7.5" stroke="#b9b5f9" stroke-width="0.8"/><rect x="0.3" y="8.4" width="9.6" height="3.4" rx="1.5" fill="#5d55ee"/><path d="M2.5 10.1 H7.8" stroke="#a9a4f7" stroke-width="0.9" stroke-dasharray="1.2 0.6"/></svg></div>
<div class="t" style="left:104px;top:447px;width:273px;overflow:hidden;font-size:11px">KWFZD-01009-2025公司保密制度.docx</div>
<div class="t c " style="left:259px;top:447px;width:300px;font-size:11px"></div>
<div class="t c " style="left:359px;top:447px;width:300px;font-size:11px"></div>
<div class="t " style="left:590px;top:447px;font-size:10px;color:#333">编辑</div>
<div class="t " style="left:629px;top:447px;font-size:10px;color:#333">详情</div>
<div class="t " style="left:668px;top:447px;font-size:10px;color:#333">移除</div>
<div style="position:absolute;left:955px;top:96px;width:187px;height:27px;background:#fdfdfd;border:1px solid #d0d0d0;border-radius:3px"></div>
<div class="t c " style="left:897px;top:103px;width:300px;font-size:11.2px">添加Word文件(.docx)</div>
<div style="position:absolute;left:955px;top:134px;width:187px;height:27px;background:#fdfdfd;border:1px solid #d0d0d0;border-radius:3px"></div>
<div class="t c " style="left:897px;top:141px;width:300px;font-size:11px">刷新列表</div>
<div style="position:absolute;left:955px;top:165px;width:187px;height:27px;background:#fdfdfd;border:1px solid #d0d0d0;border-radius:3px"></div>
<div class="t c " style="left:897px;top:172px;width:300px;font-size:11px">清空列表</div>
<div style="position:absolute;left:53px;top:675px;width:1085px;height:2px;background:#d6d6d6"></div>
<div class="t " style="left:53px;top:683px;font-size:10px;letter-spacing:-0.36px">共计 13 个文件,合计大小 834.93 KB</div>
<div style="position:absolute;left:1138px;top:49px;width:5px;height:651px;background:#2c5fdb"></div>
<div style="position:absolute;left:345px;top:220px;width:1170px;height:674px;background:#f2f2f2;border:5px solid #2c5fdb"></div>
<div style="position:absolute;left:350px;top:225px;width:1160px;height:15px;background:#f7f8fa"></div>
<div class="t " style="left:353px;top:223px;font-size:11px;letter-spacing:0.42px;color:#555">适用于文件夹目录批量生成的需求，可批量生成多层级目录。</div>
<div style="left:353px;top:247px"><svg width="11" height="11" viewBox="0 0 11 11"><circle cx="5.5" cy="5.5" r="4.9" fill="none" stroke="#444" stroke-width="0.8"/><text x="5.5" y="8.2" font-size="7.5" text-anchor="middle" fill="#333" font-family="Liberation Sans">1</text></svg></div>
<div class="t " style="left:368px;top:246px;font-size:11px">导入Excel数据源</div>
<div style="position:absolute;left:350px;top:267px;width:833px;height:25px;background:#fff;border:1px solid #cfcfcf;border-left:none;border-radius:0 3px 3px 0"></div>
<div style="position:absolute;left:1162px;top:268px;width:1px;height:23px;background:#dcdcdc"></div>
<div class="t " style="left:353px;top:272px;font-size:12px;color:#333">C:\Users\dzg\Desktop\Q文档演示数据\文件夹生成\政务与公共部门文件管理层级.xlsx</div>
<div style="left:1167px;top:275px"><svg width="10" height="8" viewBox="0 0 10 8"><path d="M1 2 L5 6 L9 2" fill="none" stroke="#555" stroke-width="1"/></svg></div>
<div style="position:absolute;left:350px;top:293px;width:972px;height:4px;background:#ececec;border-bottom:1px solid #d4d4d4"></div>
<div style="position:absolute;left:1191px;top:267px;width:41px;height:24px;background:#fdfdfd;border:1px solid #d0d0d0;border-radius:3px"></div>
<div style="left:1207px;top:275px"><svg width="10" height="10" viewBox="0 0 10 10"><path d="M2.2 2.6 A3.6 3.6 0 1 0 7.4 2.2" fill="none" stroke="#111" stroke-width="1.3"/><path d="M1 0.8 L3.6 1.6 L2 3.8Z" fill="#111"/></svg></div>
<div style="position:absolute;left:1236px;top:267px;width:41px;height:24px;background:#fdfdfd;border:1px solid #d0d0d0;border-radius:3px"></div>
<div style="left:1251px;top:273px"><svg width="11" height="11" viewBox="0 0 11 11"><path d="M2 2 L8.6 8.6" stroke="#111" stroke-width="2.4" stroke-linecap="round"/><path d="M9 9 L10 10" stroke="#555" stroke-width="1"/></svg></div>
<div style="position:absolute;left:1282px;top:267px;width:41px;height:24px;background:#fdfdfd;border:1px solid #d0d0d0;border-radius:3px"></div>
<div style="left:1298px;top:274px"><svg width="8" height="10" viewBox="0 0 8 10"><path d="M1 1.5 H7 V9 Q4 10 1 9Z" fill="#b4b4b8"/><ellipse cx="4" cy="1.5" rx="3" ry="1" fill="#8a8a90"/><path d="M3 3 V8.5 M5 3 V8.5" stroke="#d8d8dc" stroke-width="0.7"/></svg></div>
<div style="position:absolute;left:1327px;top:267px;width:183px;height:24px;background:#fdfdfd;border:1px solid #d0d0d0;border-radius:3px"></div>
<div class="t c " style="left:1271px;top:272px;width:300px;font-size:11.2px">选择数据文件(.xlsx)</div>
<div style="position:absolute;left:350px;top:296px;width:972px;height:281px;background:#fff;border-right:1px solid #d6d6d6;border-bottom:1px solid #d6d6d6"></div>
<div style="position:absolute;left:1312px;top:297px;width:9px;height:279px;background:#f5f5f5"></div>
<div style="position:absolute;left:1314px;top:300px;width:5px;height:77px;background:#c8c8c8;border-radius:3px"></div>
<div style="position:absolute;left:350px;top:297px;width:427px;height:37px;background:#f2f2f2;border-bottom:1px solid #dcdcdc"></div>
<div style="position:absolute;left:414px;top:297px;width:1px;height:280px;background:#e6e6e6"></div>
<div style="position:absolute;left:480px;top:297px;width:1px;height:280px;background:#e6e6e6"></div>
<div style="position:absolute;left:546px;top:297px;width:1px;height:280px;background:#e6e6e6"></div>
<div style="position:absolute;left:645px;top:297px;width:1px;height:280px;background:#e6e6e6"></div>
<div style="position:absolute;left:711px;top:297px;width:1px;height:280px;background:#e6e6e6"></div>
<div style="position:absolute;left:777px;top:297px;width:1px;height:280px;background:#e6e6e6"></div>
<div class="t c " style="left:232.0px;top:302px;width:300px;font-size:10px">1级目录</div>
<div class="t c " style="left:232.0px;top:316px;width:300px;font-size:10px;color:#aaa">(一级目录)</div>
<div class="t c " style="left:297.0px;top:302px;width:300px;font-size:10px">2级目录</div>
<div class="t c " style="left:297.0px;top:316px;width:300px;font-size:10px;color:#aaa">(二级目录)</div>
<div class="t c " style="left:363.0px;top:302px;width:300px;font-size:10px">3级目录</div>
<div class="t c " style="left:363.0px;top:316px;width:300px;font-size:10px;color:#aaa">(三级目录)</div>
<div class="t c " style="left:445.5px;top:302px;width:300px;font-size:10px">4级目录</div>
<div class="t c " style="left:445.5px;top:316px;width:300px;font-size:10px;color:#aaa">(四级目录)</div>
<div class="t c " style="left:528.0px;top:302px;width:300px;font-size:10px">5级目录</div>
<div class="t c " style="left:528.0px;top:316px;width:300px;font-size:10px;color:#aaa">(五级目录)</div>
<div class="t c " style="left:594.0px;top:302px;width:300px;font-size:10px">6级目录</div>
<div class="t c " style="left:594.0px;top:316px;width:300px;font-size:10px;color:#aaa">(六级目录)</div>
<div style="left:350px;top:334px;width:427px;height:242px;overflow:hidden">
<div style="left:0;top:0.0px;width:427px;height:20.7px;background:#ffffff;border-bottom:1px solid #eeeeee"></div>
<div class="t" style="left:2px;top:4.0px;font-size:10px">市政府办公室</div>
<div class="t" style="left:67.5px;top:4.0px;font-size:10px">公文处理</div>
<div class="t" style="left:133.5px;top:4.0px;font-size:10px">发文管理</div>
<div class="t" style="left:199.5px;top:4.0px;font-size:10px">年度归档（2025）</div>
<div class="t" style="left:298.5px;top:4.0px;font-size:10px">文种分类</div>
<div class="t" style="left:364.5px;top:4.0px;font-size:10px">政策文件</div>
<div style="left:0;top:20.7px;width:427px;height:20.7px;background:#f5f5f5;border-bottom:1px solid #eeeeee"></div>
<div class="t" style="left:2px;top:24.7px;font-size:10px">市政府办公室</div>
<div class="t" style="left:67.5px;top:24.7px;font-size:10px">公文处理</div>
<div class="t" style="left:133.5px;top:24.7px;font-size:10px">发文管理</div>
<div class="t" style="left:199.5px;top:24.7px;font-size:10px">年度归档（2025）</div>
<div class="t" style="left:298.5px;top:24.7px;font-size:10px">文种分类</div>
<div class="t" style="left:364.5px;top:24.7px;font-size:10px">通知通报</div>
<div style="left:0;top:41.4px;width:427px;height:20.7px;background:#ffffff;border-bottom:1px solid #eeeeee"></div>
<div class="t" style="left:2px;top:45.4px;font-size:10px">市政府办公室</div>
<div class="t" style="left:67.5px;top:45.4px;font-size:10px">公文处理</div>
<div class="t" style="left:133.5px;top:45.4px;font-size:10px">发文管理</div>
<div class="t" style="left:199.5px;top:45.4px;font-size:10px">年度归档（2025）</div>
<div class="t" style="left:298.5px;top:45.4px;font-size:10px">文种分类</div>
<div class="t" style="left:364.5px;top:45.4px;font-size:10px">报告总结</div>
<div style="left:0;top:62.099999999999994px;width:427px;height:20.7px;background:#f5f5f5;border-bottom:1px solid #eeeeee"></div>
<div class="t" style="left:2px;top:66.1px;font-size:10px">市政府办公室</div>
<div class="t" style="left:67.5px;top:66.1px;font-size:10px">公文处理</div>
<div class="t" style="left:133.5px;top:66.1px;font-size:10px">收文管理</div>
<div class="t" style="left:199.5px;top:66.1px;font-size:10px">来文单位</div>
<div class="t" style="left:298.5px;top:66.1px;font-size:10px">处理结果</div>
<div class="t" style="left:364.5px;top:66.1px;font-size:10px">批示文件</div>
<div style="left:0;top:82.8px;width:427px;height:20.7px;background:#ffffff;border-bottom:1px solid #eeeeee"></div>
<div class="t" style="left:2px;top:86.8px;font-size:10px">市政府办公室</div>
<div class="t" style="left:67.5px;top:86.8px;font-size:10px">公文处理</div>
<div class="t" style="left:133.5px;top:86.8px;font-size:10px">收文管理</div>
<div class="t" style="left:199.5px;top:86.8px;font-size:10px">来文单位</div>
<div class="t" style="left:298.5px;top:86.8px;font-size:10px">处理结果</div>
<div class="t" style="left:364.5px;top:86.8px;font-size:10px">转办文件</div>
<div style="left:0;top:103.5px;width:427px;height:20.7px;background:#f5f5f5;border-bottom:1px solid #eeeeee"></div>
<div class="t" style="left:2px;top:107.5px;font-size:10px">市政府办公室</div>
<div class="t" style="left:67.5px;top:107.5px;font-size:10px">公文处理</div>
<div class="t" style="left:133.5px;top:107.5px;font-size:10px">收文管理</div>
<div class="t" style="left:199.5px;top:107.5px;font-size:10px">来文单位</div>
<div class="t" style="left:298.5px;top:107.5px;font-size:10px">处理结果</div>
<div class="t" style="left:364.5px;top:107.5px;font-size:10px">归档文件</div>
<div style="left:0;top:124.19999999999999px;width:427px;height:20.7px;background:#ffffff;border-bottom:1px solid #eeeeee"></div>
<div class="t" style="left:2px;top:128.2px;font-size:10px">市政府办公室</div>
<div class="t" style="left:67.5px;top:128.2px;font-size:10px">专项工作</div>
<div class="t" style="left:133.5px;top:128.2px;font-size:10px">政务公开</div>
<div class="t" style="left:199.5px;top:128.2px;font-size:10px">政策解读</div>
<div class="t" style="left:298.5px;top:128.2px;font-size:10px">文稿材料</div>
<div class="t" style="left:364.5px;top:128.2px;font-size:10px">审核稿</div>
<div style="left:0;top:144.9px;width:427px;height:20.7px;background:#f5f5f5;border-bottom:1px solid #eeeeee"></div>
<div class="t" style="left:2px;top:148.9px;font-size:10px">市政府办公室</div>
<div class="t" style="left:67.5px;top:148.9px;font-size:10px">专项工作</div>
<div class="t" style="left:133.5px;top:148.9px;font-size:10px">政务公开</div>
<div class="t" style="left:199.5px;top:148.9px;font-size:10px">政策解读</div>
<div class="t" style="left:298.5px;top:148.9px;font-size:10px">发布文件</div>
<div class="t" style="left:364.5px;top:148.9px;font-size:10px">官网公示稿</div>
<div style="left:0;top:165.6px;width:427px;height:20.7px;background:#ffffff;border-bottom:1px solid #eeeeee"></div>
<div class="t" style="left:2px;top:169.6px;font-size:10px">市政府办公室</div>
<div class="t" style="left:67.5px;top:169.6px;font-size:10px">专项工作</div>
<div class="t" style="left:133.5px;top:169.6px;font-size:10px">民生项目</div>
<div class="t" style="left:199.5px;top:169.6px;font-size:10px">住房保障</div>
<div class="t" style="left:298.5px;top:169.6px;font-size:10px">项目文件</div>
<div class="t" style="left:364.5px;top:169.6px;font-size:10px">合同与协议</div>
<div style="left:0;top:186.29999999999998px;width:427px;height:20.7px;background:#f5f5f5;border-bottom:1px solid #eeeeee"></div>
<div class="t" style="left:2px;top:190.29999999999998px;font-size:10px">市政府办公室</div>
<div class="t" style="left:67.5px;top:190.29999999999998px;font-size:10px">专项工作</div>
<div class="t" style="left:133.5px;top:190.29999999999998px;font-size:10px">民生项目</div>
<div class="t" style="left:199.5px;top:190.29999999999998px;font-size:10px">住房保障</div>
<div class="t" style="left:298.5px;top:190.29999999999998px;font-size:10px">项目文件</div>
<div class="t" style="left:364.5px;top:190.29999999999998px;font-size:10px">施工备案</div>
<div style="left:0;top:207.0px;width:427px;height:20.7px;background:#ffffff;border-bottom:1px solid #eeeeee"></div>
<div class="t" style="left:2px;top:211.0px;font-size:10px">市政府办公室</div>
<div class="t" style="left:67.5px;top:211.0px;font-size:10px">专项工作</div>
<div class="t" style="left:133.5px;top:211.0px;font-size:10px">乡村振兴</div>
<div class="t" style="left:199.5px;top:211.0px;font-size:10px">项目推进</div>
<div class="t" style="left:298.5px;top:211.0px;font-size:10px">材料汇总</div>
<div class="t" style="left:364.5px;top:211.0px;font-size:10px">月度报告</div>
<div style="left:0;top:227.7px;width:427px;height:20.7px;background:#f5f5f5;border-bottom:1px solid #eeeeee"></div>
<div class="t" style="left:2px;top:231.7px;font-size:10px">市政府办公室</div>
<div class="t" style="left:67.5px;top:231.7px;font-size:10px">专项工作</div>
<div class="t" style="left:133.5px;top:231.7px;font-size:10px">乡村振兴</div>
<div class="t" style="left:199.5px;top:231.7px;font-size:10px">项目推进</div>
<div class="t" style="left:298.5px;top:231.7px;font-size:10px">材料汇总</div>
<div class="t" style="left:364.5px;top:231.7px;font-size:10px">年度总结</div>
<div style="left:64px;top:0;width:1px;height:243px;background:#e6e6e6"></div>
<div style="left:130px;top:0;width:1px;height:243px;background:#e6e6e6"></div>
<div style="left:196px;top:0;width:1px;height:243px;background:#e6e6e6"></div>
<div style="left:295px;top:0;width:1px;height:243px;background:#e6e6e6"></div>
<div style="left:361px;top:0;width:1px;height:243px;background:#e6e6e6"></div>
<div style="left:427px;top:0;width:1px;height:243px;background:#e6e6e6"></div>
</div>
<div style="position:absolute;left:1328px;top:303px;width:182px;height:274px;border:1px solid #d2d2d2;border-radius:2px"></div>
<div style="position:absolute;left:1332px;top:296px;width:40px;height:14px;background:#f2f2f2"></div>
<div class="t " style="left:1334px;top:296px;font-size:10px">文件信息</div>
<div class="t " style="left:1335px;top:311.0px;font-size:10px">文件名称: 政务与公共部门文件管理层</div>
<div class="t " style="left:1335px;top:324.55px;font-size:10px">级.xlsx</div>
<div class="t " style="left:1335px;top:338.1px;font-size:10px">文件大小: 12.12 KB</div>
<div class="t " style="left:1335px;top:351.65px;font-size:10px">最后修改: 2025-10-15 10:19:27</div>
<div class="t " style="left:1335px;top:365.2px;font-size:10px">数据量共:40条</div>
<div class="t " style="left:1335px;top:378.75px;font-size:10px">数据列共:6列</div>
<div class="t " style="left:1335px;top:392.3px;font-size:10px"></div>
<div class="t " style="left:1335px;top:405.85px;font-size:10px">--目录结构-----</div>
<div class="t " style="left:1338px;top:419.4px;font-size:10px">第1级目录 {一级目录}</div>
<div class="t " style="left:1338px;top:432.95px;font-size:10px">第2级目录 {二级目录}</div>
<div class="t " style="left:1338px;top:446.5px;font-size:10px">第3级目录 {三级目录}</div>
<div class="t " style="left:1338px;top:460.05px;font-size:10px">第4级目录 {四级目录}</div>
<div class="t " style="left:1338px;top:473.6px;font-size:10px">第5级目录 {五级目录}</div>
<div class="t " style="left:1338px;top:487.15px;font-size:10px">第6级目录 {六级目录}</div>
<div style="left:353px;top:590px"><svg width="11" height="11" viewBox="0 0 11 11"><circle cx="5.5" cy="5.5" r="4.9" fill="none" stroke="#444" stroke-width="0.8"/><text x="5.5" y="8.2" font-size="7.5" text-anchor="middle" fill="#333" font-family="Liberation Sans">2</text></svg></div>
<div class="t " style="left:368px;top:588px;font-size:11px">文件夹生成预览</div>
<div style="position:absolute;left:350px;top:611px;width:202px;height:261px;background:#fff;border:1px solid #d4d4d4;border-left:none"></div>
<div style="left:355px;top:617px"><svg width="14" height="12" viewBox="0 0 14 12"><path d="M0.5 1.5 Q0.5 0.5 1.5 0.5 H5 L6.3 1.8 H12 Q13 1.8 13 2.8 V4 H3 L0.5 11Z" fill="#2a86d6"/><path d="M3 4.5 H13.8 L11.5 11.5 H0.5Z" fill="#3ea3ef"/></svg></div>
<div class="t " style="left:372px;top:617px;font-size:10px">根目录</div>
<div style="position:absolute;left:350px;top:631px;width:202px;height:15px;background:#2776c7"></div>
<div style="left:354px;top:635px"><svg width="9" height="7" viewBox="0 0 9 7"><path d="M1 1.5 L4.5 5 L8 1.5" fill="none" stroke="#8cb8e8" stroke-width="1"/></svg></div>
<div style="left:369px;top:633px"><svg width="14" height="11" viewBox="0 0 14 11"><path d="M0.5 1.5 Q0.5 0.5 1.5 0.5 H5 L6.3 1.8 H12 Q13 1.8 13 2.8 V10.5 H0.5Z" fill="#3b9ce8"/></svg></div>
<div class="t " style="left:386px;top:632px;font-size:10px;color:#fff">市政府办公室</div>
<div style="left:371px;top:650.0px"><svg width="6" height="9" viewBox="0 0 6 9"><path d="M1 1 L4.5 4.5 L1 8" fill="none" stroke="#aaa" stroke-width="0.9"/></svg></div>
<div style="left:384px;top:648.0px"><svg width="15" height="12" viewBox="0 0 15 12"><path d="M0.5 2 Q0.5 1 1.5 1 H5.5 L6.8 2.3 H13.5 Q14.5 2.3 14.5 3.3 V10.5 Q14.5 11.5 13.5 11.5 H1.5 Q0.5 11.5 0.5 10.5Z" fill="#7cc3ee"/><path d="M0.5 3.5 H14.5 V4.3 H0.5Z" fill="#c9e8fa"/></svg></div>
<div class="t " style="left:401px;top:647.0px;font-size:10px">公文处理</div>
<div style="left:371px;top:665.1px"><svg width="6" height="9" viewBox="0 0 6 9"><path d="M1 1 L4.5 4.5 L1 8" fill="none" stroke="#aaa" stroke-width="0.9"/></svg></div>
<div style="left:384px;top:663.1px"><svg width="15" height="12" viewBox="0 0 15 12"><path d="M0.5 2 Q0.5 1 1.5 1 H5.5 L6.8 2.3 H13.5 Q14.5 2.3 14.5 3.3 V10.5 Q14.5 11.5 13.5 11.5 H1.5 Q0.5 11.5 0.5 10.5Z" fill="#7cc3ee"/><path d="M0.5 3.5 H14.5 V4.3 H0.5Z" fill="#c9e8fa"/></svg></div>
<div class="t " style="left:401px;top:662.1px;font-size:10px">专项工作</div>
<div style="left:371px;top:680.2px"><svg width="6" height="9" viewBox="0 0 6 9"><path d="M1 1 L4.5 4.5 L1 8" fill="none" stroke="#aaa" stroke-width="0.9"/></svg></div>
<div style="left:384px;top:678.2px"><svg width="15" height="12" viewBox="0 0 15 12"><path d="M0.5 2 Q0.5 1 1.5 1 H5.5 L6.8 2.3 H13.5 Q14.5 2.3 14.5 3.3 V10.5 Q14.5 11.5 13.5 11.5 H1.5 Q0.5 11.5 0.5 10.5Z" fill="#7cc3ee"/><path d="M0.5 3.5 H14.5 V4.3 H0.5Z" fill="#c9e8fa"/></svg></div>
<div class="t " style="left:401px;top:677.2px;font-size:10px">会议管理</div>
<div style="left:371px;top:695.3px"><svg width="6" height="9" viewBox="0 0 6 9"><path d="M1 1 L4.5 4.5 L1 8" fill="none" stroke="#aaa" stroke-width="0.9"/></svg></div>
<div style="left:384px;top:693.3px"><svg width="15" height="12" viewBox="0 0 15 12"><path d="M0.5 2 Q0.5 1 1.5 1 H5.5 L6.8 2.3 H13.5 Q14.5 2.3 14.5 3.3 V10.5 Q14.5 11.5 13.5 11.5 H1.5 Q0.5 11.5 0.5 10.5Z" fill="#7cc3ee"/><path d="M0.5 3.5 H14.5 V4.3 H0.5Z" fill="#c9e8fa"/></svg></div>
<div class="t " style="left:401px;top:692.3px;font-size:10px">信访工作</div>
<div style="left:371px;top:710.4px"><svg width="6" height="9" viewBox="0 0 6 9"><path d="M1 1 L4.5 4.5 L1 8" fill="none" stroke="#aaa" stroke-width="0.9"/></svg></div>
<div style="left:384px;top:708.4px"><svg width="15" height="12" viewBox="0 0 15 12"><path d="M0.5 2 Q0.5 1 1.5 1 H5.5 L6.8 2.3 H13.5 Q14.5 2.3 14.5 3.3 V10.5 Q14.5 11.5 13.5 11.5 H1.5 Q0.5 11.5 0.5 10.5Z" fill="#7cc3ee"/><path d="M0.5 3.5 H14.5 V4.3 H0.5Z" fill="#c9e8fa"/></svg></div>
<div class="t " style="left:401px;top:707.4px;font-size:10px">财务与资产</div>
<div style="left:371px;top:725.5px"><svg width="6" height="9" viewBox="0 0 6 9"><path d="M1 1 L4.5 4.5 L1 8" fill="none" stroke="#aaa" stroke-width="0.9"/></svg></div>
<div style="left:384px;top:723.5px"><svg width="15" height="12" viewBox="0 0 15 12"><path d="M0.5 2 Q0.5 1 1.5 1 H5.5 L6.8 2.3 H13.5 Q14.5 2.3 14.5 3.3 V10.5 Q14.5 11.5 13.5 11.5 H1.5 Q0.5 11.5 0.5 10.5Z" fill="#7cc3ee"/><path d="M0.5 3.5 H14.5 V4.3 H0.5Z" fill="#c9e8fa"/></svg></div>
<div class="t " style="left:401px;top:722.5px;font-size:10px">人事档案</div>
<div style="left:371px;top:740.6px"><svg width="6" height="9" viewBox="0 0 6 9"><path d="M1 1 L4.5 4.5 L1 8" fill="none" stroke="#aaa" stroke-width="0.9"/></svg></div>
<div style="left:384px;top:738.6px"><svg width="15" height="12" viewBox="0 0 15 12"><path d="M0.5 2 Q0.5 1 1.5 1 H5.5 L6.8 2.3 H13.5 Q14.5 2.3 14.5 3.3 V10.5 Q14.5 11.5 13.5 11.5 H1.5 Q0.5 11.5 0.5 10.5Z" fill="#7cc3ee"/><path d="M0.5 3.5 H14.5 V4.3 H0.5Z" fill="#c9e8fa"/></svg></div>
<div class="t " style="left:401px;top:737.6px;font-size:10px">行政事务</div>
<div style="left:371px;top:755.7px"><svg width="6" height="9" viewBox="0 0 6 9"><path d="M1 1 L4.5 4.5 L1 8" fill="none" stroke="#aaa" stroke-width="0.9"/></svg></div>
<div style="left:384px;top:753.7px"><svg width="15" height="12" viewBox="0 0 15 12"><path d="M0.5 2 Q0.5 1 1.5 1 H5.5 L6.8 2.3 H13.5 Q14.5 2.3 14.5 3.3 V10.5 Q14.5 11.5 13.5 11.5 H1.5 Q0.5 11.5 0.5 10.5Z" fill="#7cc3ee"/><path d="M0.5 3.5 H14.5 V4.3 H0.5Z" fill="#c9e8fa"/></svg></div>
<div class="t " style="left:401px;top:752.7px;font-size:10px">档案管理</div>
<div style="position:absolute;left:557px;top:611px;width:765px;height:261px;background:#fff;border:1px solid #d4d4d4"></div>
<div style="left:591.0px;top:639px"><svg width="38" height="32" viewBox="0 0 38 32"><path d="M1 4 Q1 0.5 4.5 0.5 H11 Q13 0.5 14 2 L15 3.5 H34 Q37 3.5 37 6.5 V10 H1Z" fill="#4fa3dc"/><path d="M1 7 Q1 4 4 4 H34 Q37 4 37 7 V10 H1Z" fill="#d4ecfa"/><path d="M1 8.8 H37 V26 Q37 31 32 31 H6 Q1 31 1 26Z" fill="#83c5ef"/></svg></div>
<div class="t c " style="left:460.0px;top:677px;width:300px;font-size:10px">公文处理</div>
<div style="left:682.6px;top:639px"><svg width="38" height="32" viewBox="0 0 38 32"><path d="M1 4 Q1 0.5 4.5 0.5 H11 Q13 0.5 14 2 L15 3.5 H34 Q37 3.5 37 6.5 V10 H1Z" fill="#4fa3dc"/><path d="M1 7 Q1 4 4 4 H34 Q37 4 37 7 V10 H1Z" fill="#d4ecfa"/><path d="M1 8.8 H37 V26 Q37 31 32 31 H6 Q1 31 1 26Z" fill="#83c5ef"/></svg></div>
<div class="t c " style="left:551.6px;top:677px;width:300px;font-size:10px">专项工作</div>
<div style="left:774.2px;top:639px"><svg width="38" height="32" viewBox="0 0 38 32"><path d="M1 4 Q1 0.5 4.5 0.5 H11 Q13 0.5 14 2 L15 3.5 H34 Q37 3.5 37 6.5 V10 H1Z" fill="#4fa3dc"/><path d="M1 7 Q1 4 4 4 H34 Q37 4 37 7 V10 H1Z" fill="#d4ecfa"/><path d="M1 8.8 H37 V26 Q37 31 32 31 H6 Q1 31 1 26Z" fill="#83c5ef"/></svg></div>
<div class="t c " style="left:643.2px;top:677px;width:300px;font-size:10px">会议管理</div>
<div style="left:865.8px;top:639px"><svg width="38" height="32" viewBox="0 0 38 32"><path d="M1 4 Q1 0.5 4.5 0.5 H11 Q13 0.5 14 2 L15 3.5 H34 Q37 3.5 37 6.5 V10 H1Z" fill="#4fa3dc"/><path d="M1 7 Q1 4 4 4 H34 Q37 4 37 7 V10 H1Z" fill="#d4ecfa"/><path d="M1 8.8 H37 V26 Q37 31 32 31 H6 Q1 31 1 26Z" fill="#83c5ef"/></svg></div>
<div class="t c " style="left:734.8px;top:677px;width:300px;font-size:10px">信访工作</div>
<div style="left:957.4px;top:639px"><svg width="38" height="32" viewBox="0 0 38 32"><path d="M1 4 Q1 0.5 4.5 0.5 H11 Q13 0.5 14 2 L15 3.5 H34 Q37 3.5 37 6.5 V10 H1Z" fill="#4fa3dc"/><path d="M1 7 Q1 4 4 4 H34 Q37 4 37 7 V10 H1Z" fill="#d4ecfa"/><path d="M1 8.8 H37 V26 Q37 31 32 31 H6 Q1 31 1 26Z" fill="#83c5ef"/></svg></div>
<div class="t c " style="left:826.4px;top:677px;width:300px;font-size:10px">财务与资产</div>
<div style="left:1049.0px;top:639px"><svg width="38" height="32" viewBox="0 0 38 32"><path d="M1 4 Q1 0.5 4.5 0.5 H11 Q13 0.5 14 2 L15 3.5 H34 Q37 3.5 37 6.5 V10 H1Z" fill="#4fa3dc"/><path d="M1 7 Q1 4 4 4 H34 Q37 4 37 7 V10 H1Z" fill="#d4ecfa"/><path d="M1 8.8 H37 V26 Q37 31 32 31 H6 Q1 31 1 26Z" fill="#83c5ef"/></svg></div>
<div class="t c " style="left:918.0px;top:677px;width:300px;font-size:10px">人事档案</div>
<div style="left:1140.6px;top:639px"><svg width="38" height="32" viewBox="0 0 38 32"><path d="M1 4 Q1 0.5 4.5 0.5 H11 Q13 0.5 14 2 L15 3.5 H34 Q37 3.5 37 6.5 V10 H1Z" fill="#4fa3dc"/><path d="M1 7 Q1 4 4 4 H34 Q37 4 37 7 V10 H1Z" fill="#d4ecfa"/><path d="M1 8.8 H37 V26 Q37 31 32 31 H6 Q1 31 1 26Z" fill="#83c5ef"/></svg></div>
<div class="t c " style="left:1009.5999999999999px;top:677px;width:300px;font-size:10px">行政事务</div>
<div style="left:1232.1999999999998px;top:639px"><svg width="38" height="32" viewBox="0 0 38 32"><path d="M1 4 Q1 0.5 4.5 0.5 H11 Q13 0.5 14 2 L15 3.5 H34 Q37 3.5 37 6.5 V10 H1Z" fill="#4fa3dc"/><path d="M1 7 Q1 4 4 4 H34 Q37 4 37 7 V10 H1Z" fill="#d4ecfa"/><path d="M1 8.8 H37 V26 Q37 31 32 31 H6 Q1 31 1 26Z" fill="#83c5ef"/></svg></div>
<div class="t c " style="left:1101.1999999999998px;top:677px;width:300px;font-size:10px">档案管理</div>
<div style="position:absolute;left:1333px;top:611px;width:177px;height:27px;background:#fdfdfd;border:1px solid #d0d0d0;border-radius:3px"></div>
<div class="t c " style="left:1273px;top:618px;width:300px;font-size:11px">查看帮助</div>
<div style="position:absolute;left:1333px;top:815px;width:177px;height:71px;background:#2166bd"></div>
<div style="left:1412px;top:831px"><svg width="22" height="22" viewBox="0 0 22 22"><rect x="0" y="0" width="22" height="22" rx="4" fill="#fff"/><path d="M8 5.5 L16 11 L8 16.5Z" fill="#2166bd"/></svg></div>
<div class="t c b" style="left:1273px;top:859px;width:300px;font-size:11px;color:#fff">开始批量生成</div>
<div style="position:absolute;left:1333px;top:886px;width:177px;height:3px;background:#fdfdf6"></div>
<div style="position:absolute;left:350px;top:872px;width:972px;height:1px;background:#d0d0d0"></div>
<div class="t " style="left:353px;top:877px;font-size:10px">根目录/市政府办公室</div>
<div style="position:absolute;left:1510px;top:220px;width:5px;height:674px;background:#2c5fdb"></div>
<div style="position:absolute;left:1405px;top:906px;width:151px;height:22px;background:#f7f9fc;border:1px solid #c9d3e0;border-radius:2px"></div>
<div style="left:1382px;top:903px"><svg width="54" height="27" viewBox="0 0 54 27"><g transform="rotate(-8 13 13.5)"><rect x="3" y="3" width="22" height="22" rx="3" fill="#27b81f" stroke="#fff" stroke-width="1"/><path d="M19 8.5 Q16 6.5 12.5 7 Q7.5 8 8.5 11.5 Q9.5 14 14 14 Q19 14.5 18.5 17.5 Q17.5 21 11.5 20.5 Q8.5 20 7 18.5" fill="none" stroke="#fff" stroke-width="3.2" stroke-linecap="round"/></g><g transform="rotate(-8 38 13.5)"><rect x="27" y="3" width="22" height="22" rx="3" fill="#27b81f" stroke="#fff" stroke-width="1"/><path d="M43 8.5 Q40 6.5 36.5 7 Q31.5 8 32.5 11.5 Q33.5 14 38 14 Q43 14.5 42.5 17.5 Q41.5 21 35.5 20.5 Q32.5 20 31 18.5" fill="none" stroke="#fff" stroke-width="3.2" stroke-linecap="round"/></g></svg></div>
<div class="t " style="left:1439px;top:909px;font-size:13px;font-weight:bold;color:#3a3f52">英</div>
<div style="left:1459px;top:911px"><svg width="12" height="13" viewBox="0 0 12 13"><path d="M7.5 0.5 A6 6 0 1 1 0.5 9 A5 5 0 0 0 7.5 0.5Z" fill="#3a3f52"/></svg></div>
<div style="left:1481px;top:912px"><svg width="10" height="10" viewBox="0 0 10 10"><circle cx="2" cy="2.5" r="1.4" fill="#3a3f52"/><path d="M7 5 Q8 7.5 5.5 9" stroke="#3a3f52" stroke-width="1.5" fill="none"/></svg></div>
<div style="left:1498px;top:911px"><svg width="15" height="11" viewBox="0 0 15 11"><rect x="0" y="0" width="15" height="11" rx="1.5" fill="#3a3f52"/><path d="M2 3 H13 M2 5.5 H13" stroke="#fff" stroke-width="1" stroke-dasharray="1.2 0.8"/><path d="M4 8 H11" stroke="#fff" stroke-width="1"/></svg></div>
<div style="left:1521px;top:910px"><svg width="12" height="13" viewBox="0 0 12 13"><circle cx="6" cy="3.5" r="2.8" fill="#3a3f52"/><path d="M0.5 12.5 Q1 7.2 6 7.2 Q11 7.2 11.5 12.5Z" fill="#3a3f52"/></svg></div>
<div style="left:1538px;top:910px"><svg width="13" height="13" viewBox="0 0 13 13"><circle cx="3.2" cy="3.2" r="2.9" fill="#3a3f52"/><circle cx="9.8" cy="3.2" r="2.9" fill="#3a3f52"/><circle cx="3.2" cy="9.8" r="2.9" fill="#3a3f52"/><circle cx="9.8" cy="9.8" r="2.9" fill="#3a3f52"/><rect x="5" y="5" width="3" height="3" fill="#f7f9fc"/></svg></div>
</body></html>
